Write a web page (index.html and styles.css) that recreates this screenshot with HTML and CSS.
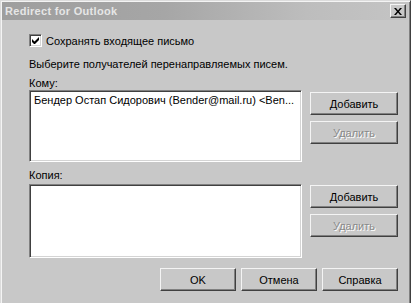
FILE: index.html
```html
<!DOCTYPE html>
<html lang="ru">
<head>
  <meta charset="UTF-8" />
  <meta name="viewport" content="width=device-width, initial-scale=1.0" />
  <title>Redirect for Outlook</title>
  <link rel="stylesheet" href="styles.css">
</head>
<body>
  <div class="window">
    <div class="titlebar">
      <span class="title">Redirect for Outlook</span>
      <button class="close" type="button" aria-label="Закрыть">
        <svg width="8" height="7" viewBox="0 0 8 7">
          <path d="M0 0h2l2 2.5L6 0h2L5 3.5 8 7H6L4 4.5 2 7H0l3-3.5z" fill="#000"/>
        </svg>
      </button>
    </div>

    <div class="content">
      <label class="check-row">
        <span class="checkbox">
          <svg width="7" height="7" viewBox="0 0 7 7">
            <path d="M0 2v3l2 2h1l4-4V0L2.5 4.5z" fill="#000"/>
          </svg>
        </span>
        Сохранять входящее письмо
      </label>

      <p class="hint">Выберите получателей перенаправляемых писем.</p>

      <p class="label">Кому:</p>
      <div class="list-row">
        <div class="listbox tall">
          <div class="item">Бендер Остап Сидорович (Bender@mail.ru) &lt;Ben...</div>
        </div>
        <div class="side-buttons">
          <button class="btn wide" type="button">Добавить</button>
          <button class="btn wide" type="button" disabled>Удалить</button>
        </div>
      </div>

      <p class="label copy">Копия:</p>
      <div class="list-row">
        <div class="listbox short"></div>
        <div class="side-buttons second">
          <button class="btn wide" type="button">Добавить</button>
          <button class="btn wide" type="button" disabled>Удалить</button>
        </div>
      </div>

      <div class="footer">
        <button class="btn" type="button">OK</button>
        <button class="btn" type="button">Отмена</button>
        <button class="btn" type="button">Справка</button>
      </div>
    </div>
  </div>
</body>
</html>
```

FILE: styles.css
```css
body {
  margin: 0;
  font-family: 'Liberation Sans', Arial, sans-serif;
  font-size: 11px;
  color: #000;
  background-color: #c8c8c8;
}
.window {
  width: 411px;
  height: 303px;
  box-sizing: border-box;
  padding: 1px 2px 0 1px;
  border-top: 1px solid #dcdcdc;
  border-left: 1px solid #dcdcdc;
  border-right: 1px solid #404040;
  box-shadow: inset 1px 1px #f4f4f4, inset -1px 0 #808080;
  background-color: #c8c8c8;
  overflow: hidden;
}
.titlebar {
  height: 18px;
  display: flex;
  align-items: center;
  justify-content: space-between;
  padding: 0 2px 0 3px;
  background: linear-gradient(to right, #9e9e9e 0%, #a6a6a6 40%, #bdbdbd 75%, #c4c4c4 100%);
}
.title {
  font-weight: bold;
  color: #e6e6e6;
  letter-spacing: 0.3px;
}
.close {
  width: 16px;
  height: 14px;
  padding: 0;
  display: flex;
  align-items: center;
  justify-content: center;
  background-color: #c8c8c8;
  border: 1px solid;
  border-color: #f4f4f4 #404040 #404040 #f4f4f4;
  box-shadow: inset -1px -1px #808080;
}
.content {
  padding: 0 10px 0 27px;
}
.check-row {
  display: flex;
  align-items: center;
  gap: 4px;
  height: 13px;
  margin-top: 14px;
}
.checkbox {
  width: 13px;
  height: 13px;
  box-sizing: border-box;
  display: flex;
  align-items: center;
  justify-content: center;
  background-color: #fff;
  border: 1px solid;
  border-color: #808080 #fff #fff #808080;
  box-shadow: inset 1px 1px #404040, inset -1px -1px #d4d4d4;
}
.hint, .label {
  margin: 0;
  line-height: 13px;
}
.hint {
  margin-top: 11px;
}
.label {
  margin-top: 6px;
}
.label.copy {
  margin-top: 7px;
  margin-bottom: 2px;
}
.list-row {
  display: flex;
  gap: 8px;
}
.listbox {
  width: 274px;
  box-sizing: border-box;
  background-color: #fff;
  border: 1px solid;
  border-color: #808080 #fff #fff #808080;
  box-shadow: inset 1px 1px #404040, inset -1px -1px #d4d4d4;
  padding: 3px 4px;
}
.listbox.tall {
  height: 72px;
}
.listbox.short {
  height: 74px;
}
.item {
  line-height: 13px;
  white-space: nowrap;
}
.side-buttons {
  display: flex;
  flex-direction: column;
  gap: 6px;
  padding-top: 2px;
}
.side-buttons.second {
  padding-top: 1px;
}
.btn {
  width: 76px;
  height: 23px;
  padding: 0;
  font-family: inherit;
  font-size: 11px;
  color: #000;
  background-color: #c8c8c8;
  border: 1px solid;
  border-color: #f4f4f4 #404040 #404040 #f4f4f4;
  box-shadow: inset -1px -1px #808080;
}
.btn.wide {
  width: 88px;
}
.btn:disabled {
  color: #8a8a8a;
  text-shadow: 1px 1px #fff;
}
.footer {
  display: flex;
  justify-content: flex-end;
  gap: 5px;
  margin-top: 10px;
}
```
